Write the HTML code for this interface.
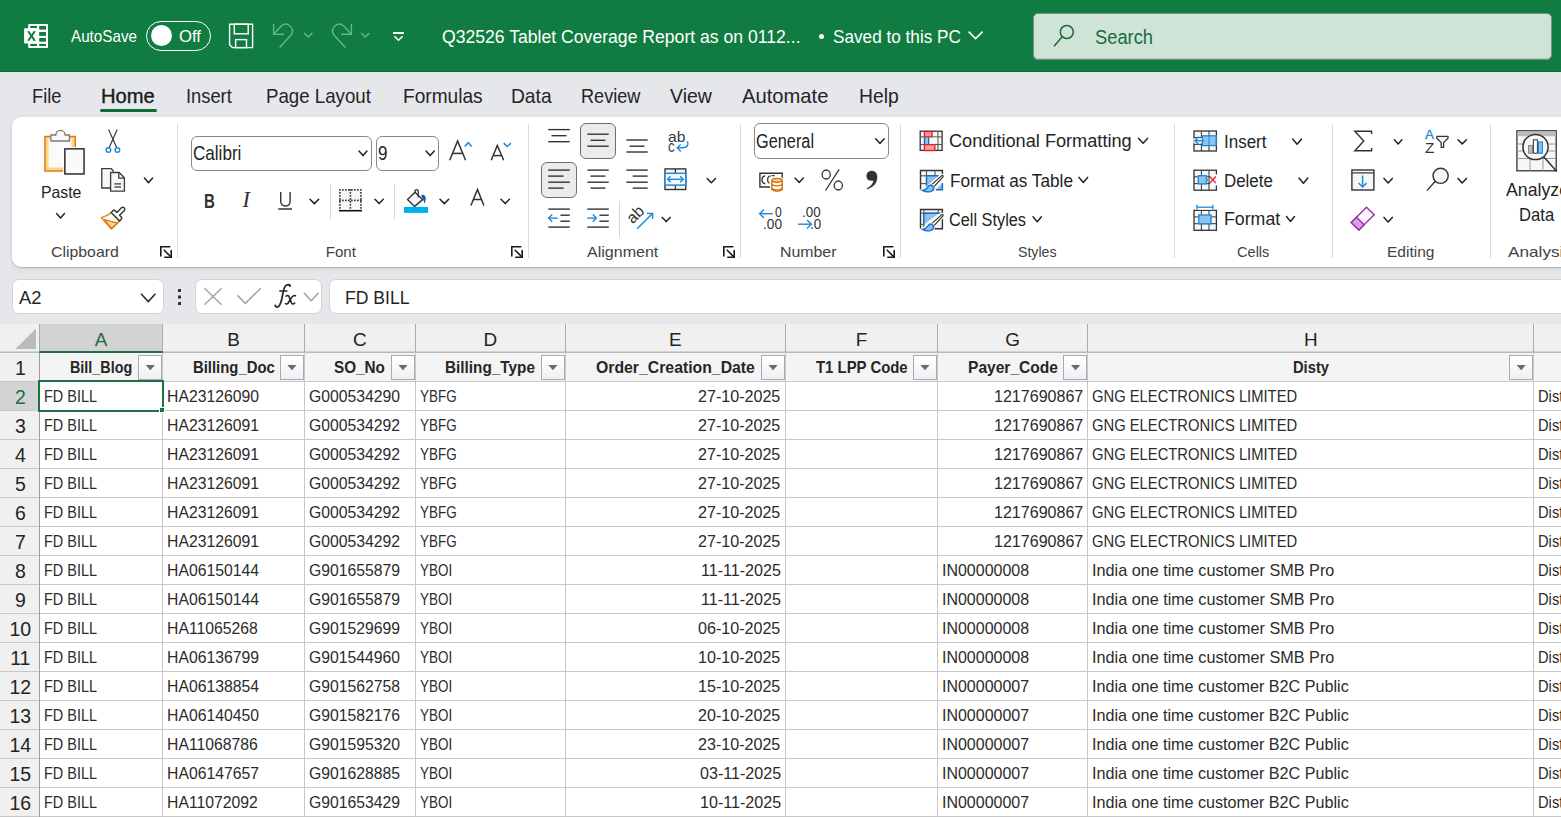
<!DOCTYPE html><html><head><meta charset="utf-8"><style>
html,body{margin:0;padding:0;width:1561px;height:817px;overflow:hidden;background:#E5E7EB;position:relative}
.t{position:absolute;white-space:nowrap;font-family:"Liberation Sans",sans-serif;line-height:normal;transform-origin:0 0}
.r{position:absolute;box-sizing:border-box}
.s{position:absolute;overflow:visible}
</style></head><body>
<div class="r" style="left:0px;top:0px;width:1561px;height:72px;background:#107C41"></div>
<div class="r" style="left:0px;top:71px;width:1561px;height:1px;background:#0C6A36"></div>
<div class="r" style="left:12px;top:116.5px;width:1580px;height:150.5px;background:#fff;border-radius:9px;box-shadow:0 1px 1.5px rgba(0,0,0,0.2),0 2px 6px rgba(0,0,0,0.07)"></div>
<svg class="s" style="left:0;top:0" width="1561" height="817" viewBox="0 0 1561 817"><g transform="translate(20,20)"><path d="M9,3.9 L27.2,3.9 Q28,3.9 28,4.7 L28,27.2 Q28,28 27.2,28 L9,28 Q8.2,28 8.2,27.2 L8.2,23.6 L4.9,23.6 Q4.1,23.6 4.1,22.8 L4.1,9 Q4.1,8.2 4.9,8.2 L8.2,8.2 L8.2,4.7 Q8.2,3.9 9,3.9 Z" fill="#fff"/><g fill="#107C41"><rect x="19.2" y="5.9" width="6.8" height="3.7"/><rect x="19.2" y="12" width="6.8" height="3.9"/><rect x="19.2" y="18" width="6.8" height="3.7"/><rect x="19.2" y="23.9" width="6.8" height="2.1"/><rect x="10.2" y="5.9" width="6.8" height="2.1"/><rect x="10.2" y="23.9" width="6.8" height="2.1"/></g><path d="M7.2,11.2 L9.6,11.2 L11.5,14.4 L13.4,11.2 L15.8,11.2 L12.8,16 L15.9,20.8 L13.5,20.8 L11.5,17.6 L9.5,20.8 L7.1,20.8 L10.2,16 Z" fill="#107C41"/></g></svg>
<div class="t" style="left:71.00px;top:27.53px;font-size:15.99px;color:#FFFFFF;transform:scaleX(0.9520);">AutoSave</div>
<div class="r" style="left:146px;top:21px;width:65px;height:30px;border:1.5px solid #fff;border-radius:15px"></div>
<div class="r" style="left:150.5px;top:24.7px;width:21.6px;height:21.6px;background:#fff;border-radius:50%"></div>
<div class="t" style="left:179.00px;top:26.87px;font-size:16.72px;color:#FFFFFF;">Off</div>
<svg class="s" style="left:0;top:0" width="1561" height="817" viewBox="0 0 1561 817"><g transform="translate(215,10)" fill="none" stroke="#fff" stroke-width="1.4"><path d="M14.6,14.2 L37.6,14.2 L37.6,37.6 L17.4,37.6 L14.6,34.8 Z"/><rect x="19.3" y="14.2" width="13.9" height="9.6"/><rect x="20.6" y="29.6" width="10.9" height="8"/></g><g transform="translate(215,10)" fill="none" stroke="#5FB88A" stroke-width="1.4"><polyline points="58.6,14 58.6,24.2 69,24.2"/><path d="M59,23.8 L66.2,16 Q71.2,12 75.6,16.4 Q79.6,21 75.4,25.8 L64.6,37.4"/><polyline points="89.2,23 93.2,27 97.4,23"/><polyline points="136.4,14 136.4,24.2 126,24.2"/><path d="M136,23.8 L128.8,16 Q123.8,12 119.4,16.4 Q115.4,21 119.6,25.8 L130.4,37.4"/><polyline points="146.2,23 150.2,27 154.4,23"/></g><rect x="393" y="32" width="11" height="2" fill="#fff"/><polyline points="394.4,36.2 398.5,40.2 402.6,36.2" fill="none" stroke="#fff" stroke-width="1.6"/></svg>
<div class="t" style="left:442.40px;top:25.89px;font-size:18.90px;color:#FFFFFF;transform:scaleX(0.9319);">Q32526 Tablet Coverage Report as on 0112...</div>
<div class="r" style="left:819px;top:34px;width:5px;height:5px;background:#fff;border-radius:50%"></div>
<div class="t" style="left:833.00px;top:25.89px;font-size:18.90px;color:#FFFFFF;transform:scaleX(0.9095);">Saved to this PC</div>
<svg class="s" style="left:0;top:0" width="1561" height="817" viewBox="0 0 1561 817"><polyline points="968.6,31.6 975.6,38.6 982.6,31.6" fill="none" stroke="#fff" stroke-width="1.6"/></svg>
<div class="r" style="left:1033px;top:12.5px;width:518.5px;height:47px;background:#CFE4D7;border:1px solid #7E8E84;border-radius:5px;box-shadow:inset 0 -1px 0 rgba(0,0,0,0.12)"></div>
<svg class="s" style="left:0;top:0" width="1561" height="817" viewBox="0 0 1561 817"><g fill="none" stroke="#1A6A3C" stroke-width="1.5"><circle cx="1066.8" cy="32" r="6.5"/><line x1="1062.2" y1="36.8" x2="1054" y2="46.2"/></g></svg>
<div class="t" style="left:1095.00px;top:24.92px;font-size:21.08px;color:#176B3D;transform:scaleX(0.8686);">Search</div>
<div class="t" style="left:32.30px;top:84.32px;font-size:20.64px;color:#242424;transform:scaleX(0.8841);">File</div>
<div class="t" style="left:101.30px;top:84.32px;font-size:20.64px;color:#1A1A1A;transform:scaleX(0.9772);-webkit-text-stroke:0.35px #1A1A1A;">Home</div>
<div class="t" style="left:186.40px;top:84.32px;font-size:20.64px;color:#242424;transform:scaleX(0.8873);">Insert</div>
<div class="t" style="left:265.70px;top:84.32px;font-size:20.64px;color:#242424;transform:scaleX(0.9060);">Page Layout</div>
<div class="t" style="left:402.70px;top:84.32px;font-size:20.64px;color:#242424;transform:scaleX(0.9255);">Formulas</div>
<div class="t" style="left:511.00px;top:84.32px;font-size:20.64px;color:#242424;transform:scaleX(0.9313);">Data</div>
<div class="t" style="left:580.60px;top:84.32px;font-size:20.64px;color:#242424;transform:scaleX(0.8777);">Review</div>
<div class="t" style="left:670.00px;top:84.32px;font-size:20.64px;color:#242424;transform:scaleX(0.9467);">View</div>
<div class="t" style="left:741.60px;top:84.32px;font-size:20.64px;color:#242424;transform:scaleX(0.9781);">Automate</div>
<div class="t" style="left:858.70px;top:84.32px;font-size:20.64px;color:#242424;transform:scaleX(0.9353);">Help</div>
<div class="r" style="left:100px;top:109px;width:57px;height:3px;background:#0F6B37;border-radius:2px"></div>
<div class="t" style="left:51.00px;top:243.32px;font-size:15.12px;color:#424242;transform:scaleX(1.0479);">Clipboard</div>
<div class="t" style="left:325.70px;top:243.32px;font-size:15.12px;color:#424242;">Font</div>
<div class="t" style="left:586.50px;top:243.32px;font-size:15.12px;color:#424242;transform:scaleX(1.0607);">Alignment</div>
<div class="t" style="left:779.50px;top:243.32px;font-size:15.12px;color:#424242;transform:scaleX(1.0510);">Number</div>
<div class="t" style="left:1017.50px;top:243.32px;font-size:15.12px;color:#424242;transform:scaleX(0.9353);">Styles</div>
<div class="t" style="left:1237.00px;top:243.32px;font-size:15.12px;color:#424242;transform:scaleX(0.9643);">Cells</div>
<div class="t" style="left:1387.40px;top:243.32px;font-size:15.12px;color:#424242;transform:scaleX(1.0256);">Editing</div>
<div class="t" style="left:1508.00px;top:243.32px;font-size:15.12px;color:#424242;transform:scaleX(1.1370);">Analysis</div>
<div class="r" style="left:177px;top:124px;width:1px;height:134px;background:#D9D9D9"></div>
<div class="r" style="left:528px;top:124px;width:1px;height:134px;background:#D9D9D9"></div>
<div class="r" style="left:740px;top:124px;width:1px;height:134px;background:#D9D9D9"></div>
<div class="r" style="left:900px;top:124px;width:1px;height:134px;background:#D9D9D9"></div>
<div class="r" style="left:1174px;top:124px;width:1px;height:134px;background:#D9D9D9"></div>
<div class="r" style="left:1332px;top:124px;width:1px;height:134px;background:#D9D9D9"></div>
<div class="r" style="left:1490px;top:124px;width:1px;height:134px;background:#D9D9D9"></div>
<svg class="s" style="left:0;top:0" width="1561" height="817" viewBox="0 0 1561 817"><g fill="none" stroke="#1A1A1A" stroke-width="1.6" stroke-linecap="round"><polyline points="160.8,256 160.8,246.8 169.8,246.8"/><line x1="164.2" y1="250.2" x2="171" y2="257"/><polyline points="171.2,250.6 171.2,257.2 164.8,257.2"/></g><g fill="none" stroke="#1A1A1A" stroke-width="1.6" stroke-linecap="round"><polyline points="511.8,256 511.8,246.8 520.8,246.8"/><line x1="515.2" y1="250.2" x2="522" y2="257"/><polyline points="522.2,250.6 522.2,257.2 515.8,257.2"/></g><g fill="none" stroke="#1A1A1A" stroke-width="1.6" stroke-linecap="round"><polyline points="723.8,256 723.8,246.8 732.8,246.8"/><line x1="727.2" y1="250.2" x2="734" y2="257"/><polyline points="734.2,250.6 734.2,257.2 727.8,257.2"/></g><g fill="none" stroke="#1A1A1A" stroke-width="1.6" stroke-linecap="round"><polyline points="883.8,256 883.8,246.8 892.8,246.8"/><line x1="887.2" y1="250.2" x2="894" y2="257"/><polyline points="894.2,250.6 894.2,257.2 887.8,257.2"/></g><g transform="translate(36,124)"><rect x="8.95" y="12.5" width="30.3" height="34.5" fill="#F9D88C" stroke="#E27A14" stroke-width="1.5"/><rect x="12.6" y="15" width="23" height="28.5" fill="#FAFAFA"/><path d="M14.9,17 L14.9,11 L19.8,11 A4.65,4.65 0 1 1 29.1,11 L33.4,11 L33.4,17 Z" fill="#FAFAFA" stroke="#7A7A7A" stroke-width="1.3"/><rect x="27.2" y="23.2" width="22.4" height="28.4" fill="#fff"/><rect x="28.85" y="24.85" width="19.2" height="25.1" fill="#FAFAFA" stroke="#2F2F2F" stroke-width="1.5"/></g></svg>
<div class="t" style="left:40.80px;top:183.17px;font-size:16.72px;color:#242424;transform:scaleX(0.9452);">Paste</div>
<svg class="s" style="left:0;top:0" width="1561" height="817" viewBox="0 0 1561 817"><polyline points="56.5,213.5 60.5,218 64.5,213.5" fill="none" stroke="#242424" stroke-width="1.5" stroke-linecap="round" stroke-linejoin="round"/><g transform="translate(96,124)" fill="none"><line x1="12.6" y1="5.5" x2="20.6" y2="23.4" stroke="#3B3B3B" stroke-width="1.2"/><line x1="21.2" y1="5.5" x2="13.2" y2="23.4" stroke="#3B3B3B" stroke-width="1.2"/><circle cx="12.4" cy="26" r="2.3" stroke="#1E8BDB" stroke-width="1.4" fill="#fff"/><circle cx="21.4" cy="26" r="2.3" stroke="#1E8BDB" stroke-width="1.4" fill="#fff"/></g><g transform="translate(96,124)" stroke="#3B3B3B" stroke-width="1.3" fill="#F7F7F7"><path d="M14,64 L5.8,64 L5.8,44.7 L15.3,44.7 L17.6,47.5" fill="#F7F7F7"/><path d="M14.6,67.2 L14.6,48.5 L23.2,48.5 L28.4,53.7 L28.4,67.2 Z" fill="#F7F7F7"/><polyline points="22.8,48.5 22.8,54.2 28.4,54.2" fill="none"/><line x1="18.4" y1="59.9" x2="25" y2="59.9"/><line x1="18.4" y1="63" x2="25" y2="63"/></g><polyline points="144.4,178 148.5,182.8 152.6,178" fill="none" stroke="#242424" stroke-width="1.5" stroke-linecap="round" stroke-linejoin="round"/><g transform="translate(96,200)" stroke-linejoin="round"><path d="M15.2,12.6 Q10.5,16.8 5.4,17.6 L15.5,29 L23.6,21 Z" fill="#FAFAFA" stroke="#E07A12" stroke-width="1.4"/><path d="M8.4,19.6 L21.4,23.2 L15.4,28.4 Z" fill="#F9D88C" stroke="#E07A12" stroke-width="1.3"/><path d="M15.2,12.6 L17.9,10.1 Q18.3,9.8 18.7,10.2 L20.9,12.4 L25.7,7.6 Q27,6.6 28.3,7.9 Q29.4,9.2 28.4,10.5 L23.5,15.3 L25.8,17.6 Q26,18 25.7,18.4 L23.6,21 Z" fill="#fff" stroke="#333" stroke-width="1.4"/></g></svg>
<div class="r" style="left:190.5px;top:135.5px;width:181px;height:35.2px;border:1px solid #8A8A8A;border-radius:6px;background:#fff"></div>
<div class="t" style="left:193.20px;top:142.44px;font-size:19.62px;color:#242424;transform:scaleX(0.8704);">Calibri</div>
<svg class="s" style="left:0;top:0" width="1561" height="817" viewBox="0 0 1561 817"><polyline points="359,151 363.0,155.6 367,151" fill="none" stroke="#242424" stroke-width="1.5" stroke-linecap="round" stroke-linejoin="round"/></svg>
<div class="r" style="left:375.5px;top:135.5px;width:63px;height:35.2px;border:1px solid #8A8A8A;border-radius:6px;background:#fff"></div>
<div class="t" style="left:378.00px;top:142.44px;font-size:19.62px;color:#242424;transform:scaleX(0.8706);">9</div>
<svg class="s" style="left:0;top:0" width="1561" height="817" viewBox="0 0 1561 817"><polyline points="426,151 430.15,155.6 434.3,151" fill="none" stroke="#242424" stroke-width="1.5" stroke-linecap="round" stroke-linejoin="round"/><g fill="none" stroke="#333" stroke-width="1.5" stroke-linejoin="miter"><polyline points="449.7,160.3 457.6,141 465.6,160.3"/><line x1="452.6" y1="153.4" x2="462.7" y2="153.4"/><polyline points="491.2,160.3 497.3,145.4 503.7,160.3"/><line x1="493.4" y1="155.6" x2="501.3" y2="155.6"/></g><polyline points="464.8,146.5 468.3,142.7 471.7,146.5" fill="none" stroke="#1E8BDB" stroke-width="1.6"/><polyline points="503.7,143.2 507.2,146.5 510.9,143.2" fill="none" stroke="#1E8BDB" stroke-width="1.6"/></svg>
<div class="t" style="left:203.60px;top:188.92px;font-size:20.64px;color:#333;font-weight:bold;transform:scaleX(0.7313);">B</div>
<div class="t" style="left:242.6px;top:187.01px;font-family:'Liberation Serif',serif;font-style:italic;font-size:22.21px;color:#333">I</div>
<svg class="s" style="left:0;top:0" width="1561" height="817" viewBox="0 0 1561 817"><path d="M280.7,192 L280.7,201 Q280.7,206 285.4,206 Q290.1,206 290.1,201 L290.1,192" fill="none" stroke="#333" stroke-width="1.4"/><line x1="278.3" y1="209" x2="292" y2="209" stroke="#333" stroke-width="1.5" stroke-linecap="butt"/><polyline points="310,199.2 314.35,203.6 318.7,199.2" fill="none" stroke="#242424" stroke-width="1.5" stroke-linecap="round" stroke-linejoin="round"/></svg>
<div class="r" style="left:329.5px;top:183.5px;width:1px;height:35px;background:#D6D6D6"></div>
<svg class="s" style="left:0;top:0" width="1561" height="817" viewBox="0 0 1561 817"><rect x="339.5" y="189" width="22" height="19" fill="#F7F7F7"/><g fill="#2A2A2A"><rect x="339.1" y="189.1" width="1.6" height="1.6"/><rect x="339.1" y="192.1" width="1.6" height="1.6"/><rect x="339.1" y="195.1" width="1.6" height="1.6"/><rect x="339.1" y="198.1" width="1.6" height="1.6"/><rect x="339.1" y="199.6" width="1.6" height="1.6"/><rect x="339.1" y="201.1" width="1.6" height="1.6"/><rect x="339.1" y="204.1" width="1.6" height="1.6"/><rect x="339.1" y="207.1" width="1.6" height="1.6"/><rect x="342.1" y="189.1" width="1.6" height="1.6"/><rect x="342.1" y="199.6" width="1.6" height="1.6"/><rect x="345.1" y="189.1" width="1.6" height="1.6"/><rect x="345.1" y="199.6" width="1.6" height="1.6"/><rect x="348.1" y="189.1" width="1.6" height="1.6"/><rect x="348.1" y="199.6" width="1.6" height="1.6"/><rect x="349.6" y="189.1" width="1.6" height="1.6"/><rect x="349.6" y="192.1" width="1.6" height="1.6"/><rect x="349.6" y="195.1" width="1.6" height="1.6"/><rect x="349.6" y="198.1" width="1.6" height="1.6"/><rect x="349.6" y="201.1" width="1.6" height="1.6"/><rect x="349.6" y="204.1" width="1.6" height="1.6"/><rect x="349.6" y="207.1" width="1.6" height="1.6"/><rect x="351.1" y="189.1" width="1.6" height="1.6"/><rect x="351.1" y="199.6" width="1.6" height="1.6"/><rect x="354.1" y="189.1" width="1.6" height="1.6"/><rect x="354.1" y="199.6" width="1.6" height="1.6"/><rect x="357.1" y="189.1" width="1.6" height="1.6"/><rect x="357.1" y="199.6" width="1.6" height="1.6"/><rect x="360.1" y="189.1" width="1.6" height="1.6"/><rect x="360.1" y="192.1" width="1.6" height="1.6"/><rect x="360.1" y="195.1" width="1.6" height="1.6"/><rect x="360.1" y="198.1" width="1.6" height="1.6"/><rect x="360.1" y="199.6" width="1.6" height="1.6"/><rect x="360.1" y="201.1" width="1.6" height="1.6"/><rect x="360.1" y="204.1" width="1.6" height="1.6"/><rect x="360.1" y="207.1" width="1.6" height="1.6"/></g><line x1="339" y1="210.7" x2="362" y2="210.7" stroke="#111" stroke-width="1.6" stroke-linecap="butt"/><polyline points="375,199.2 379.15,203.6 383.3,199.2" fill="none" stroke="#242424" stroke-width="1.5" stroke-linecap="round" stroke-linejoin="round"/></svg>
<div class="r" style="left:394px;top:183.5px;width:1px;height:35px;background:#D6D6D6"></div>
<svg class="s" style="left:0;top:0" width="1561" height="817" viewBox="0 0 1561 817"><path d="M407.5,199.6 L415,192.2 L422.6,199.6 L414.6,206.4 Z" fill="#F7F7F7" stroke="#333" stroke-width="1.4" stroke-linejoin="round"/><path d="M415,192.6 L415,190.6 Q416.6,188.6 418.2,190.6 L418.4,197.4" fill="none" stroke="#333" stroke-width="1.3"/><path d="M421,195.2 Q425,193.4 425.8,198.4 Q425.6,201.2 424.6,203.8 Q423.4,199 421,195.2 Z" fill="#0F5FB0"/><rect x="404" y="206.9" width="24" height="6" fill="#00AFEF"/><polyline points="440,199.2 444.35,203.6 448.7,199.2" fill="none" stroke="#242424" stroke-width="1.5" stroke-linecap="round" stroke-linejoin="round"/><g fill="none" stroke="#333" stroke-width="1.5"><polyline points="470.9,205.5 477.5,189.6 483.9,205.5"/><line x1="473.2" y1="199.5" x2="481.6" y2="199.5"/></g><polyline points="501,199.2 505.2,203.6 509.4,199.2" fill="none" stroke="#242424" stroke-width="1.5" stroke-linecap="round" stroke-linejoin="round"/><line x1="548.2" y1="129.6" x2="569.8" y2="129.6" stroke="#333" stroke-width="1.4"/><line x1="551.5" y1="135.7" x2="566.5" y2="135.7" stroke="#333" stroke-width="1.4"/><line x1="548.2" y1="141.7" x2="569.8" y2="141.7" stroke="#333" stroke-width="1.4"/></svg>
<div class="r" style="left:580.2px;top:123.1px;width:35.6px;height:35.6px;background:#EBEBEB;border:1px solid #6E6E6E;border-radius:6px"></div>
<svg class="s" style="left:0;top:0" width="1561" height="817" viewBox="0 0 1561 817"><line x1="587.4" y1="134.2" x2="608.7" y2="134.2" stroke="#333" stroke-width="1.4"/><line x1="590.5" y1="140.3" x2="605.5" y2="140.3" stroke="#333" stroke-width="1.4"/><line x1="587.4" y1="146.2" x2="608.7" y2="146.2" stroke="#333" stroke-width="1.4"/><line x1="626.4" y1="140" x2="647.7" y2="140" stroke="#333" stroke-width="1.4"/><line x1="629.5" y1="146.2" x2="644.5" y2="146.2" stroke="#333" stroke-width="1.4"/><line x1="626.4" y1="152" x2="647.7" y2="152" stroke="#333" stroke-width="1.4"/></svg>
<div class="t" style="left:667.60px;top:127.65px;font-size:15.41px;color:#3A3A3A;transform:scaleX(1.0154);">ab</div>
<div class="t" style="left:667.80px;top:137.00px;font-size:16.57px;color:#3A3A3A;transform:scaleX(0.7966);">c</div>
<svg class="s" style="left:0;top:0" width="1561" height="817" viewBox="0 0 1561 817"><path d="M687.4,141.2 Q689.6,147.5 682.5,147.8 L677.2,147.8" fill="none" stroke="#1E8BDB" stroke-width="1.4"/><polyline points="680.6,144.4 677.2,147.8 680.8,151.4" fill="none" stroke="#1E8BDB" stroke-width="1.4"/></svg>
<div class="r" style="left:541.1px;top:162.3px;width:35.8px;height:35.6px;background:#EBEBEB;border:1px solid #6E6E6E;border-radius:6px"></div>
<svg class="s" style="left:0;top:0" width="1561" height="817" viewBox="0 0 1561 817"><line x1="548.2" y1="170.1" x2="569.8" y2="170.1" stroke="#333" stroke-width="1.4"/><line x1="548.2" y1="176.1" x2="563.6" y2="176.1" stroke="#333" stroke-width="1.4"/><line x1="548.2" y1="182.2" x2="569.8" y2="182.2" stroke="#333" stroke-width="1.4"/><line x1="548.2" y1="188.1" x2="563.6" y2="188.1" stroke="#333" stroke-width="1.4"/><line x1="587.4" y1="170.1" x2="608.7" y2="170.1" stroke="#333" stroke-width="1.4"/><line x1="590.5" y1="176.1" x2="605.5" y2="176.1" stroke="#333" stroke-width="1.4"/><line x1="587.4" y1="182.2" x2="608.7" y2="182.2" stroke="#333" stroke-width="1.4"/><line x1="590.5" y1="188.1" x2="605.5" y2="188.1" stroke="#333" stroke-width="1.4"/><line x1="626.4" y1="170.1" x2="647.7" y2="170.1" stroke="#333" stroke-width="1.4"/><line x1="632.7" y1="176.1" x2="647.7" y2="176.1" stroke="#333" stroke-width="1.4"/><line x1="626.4" y1="182.2" x2="647.7" y2="182.2" stroke="#333" stroke-width="1.4"/><line x1="632.7" y1="188.1" x2="647.7" y2="188.1" stroke="#333" stroke-width="1.4"/><rect x="665" y="168.9" width="20.8" height="20.6" fill="#F7F7F7" stroke="#333" stroke-width="1.4"/><line x1="675.4" y1="168.9" x2="675.4" y2="189.5" stroke="#333" stroke-width="1.3"/><rect x="665" y="173.3" width="20.8" height="11.8" fill="#F7F7F7" stroke="#1E8BDB" stroke-width="1.5"/><g fill="none" stroke="#1E8BDB" stroke-width="1.4"><line x1="667.6" y1="179.3" x2="683.2" y2="179.3"/><polyline points="670.6,176.3 667.6,179.3 670.6,182.3"/><polyline points="680.2,176.3 683.2,179.3 680.2,182.3"/></g><polyline points="707.2,178.5 711.35,182.7 715.5,178.5" fill="none" stroke="#242424" stroke-width="1.5" stroke-linecap="round" stroke-linejoin="round"/><line x1="548.3" y1="209.1" x2="569.8" y2="209.1" stroke="#333" stroke-width="1.4"/><line x1="560.4" y1="215.2" x2="569.8" y2="215.2" stroke="#333" stroke-width="1.4"/><line x1="560.4" y1="221.2" x2="569.8" y2="221.2" stroke="#333" stroke-width="1.4"/><line x1="548.3" y1="227.1" x2="569.8" y2="227.1" stroke="#333" stroke-width="1.4"/><g fill="none" stroke="#1E8BDB" stroke-width="1.4"><line x1="548.8" y1="218.1" x2="557.7" y2="218.1"/><polyline points="552.2,214.4 548.6,218.1 552.2,221.8"/></g><line x1="587.3" y1="209.1" x2="608.8" y2="209.1" stroke="#333" stroke-width="1.4"/><line x1="599.4" y1="215.2" x2="608.8" y2="215.2" stroke="#333" stroke-width="1.4"/><line x1="599.4" y1="221.2" x2="608.8" y2="221.2" stroke="#333" stroke-width="1.4"/><line x1="587.3" y1="227.1" x2="608.8" y2="227.1" stroke="#333" stroke-width="1.4"/><g fill="none" stroke="#1E8BDB" stroke-width="1.4"><line x1="587.3" y1="218.1" x2="596.2" y2="218.1"/><polyline points="592.8,214.4 596.4,218.1 592.8,221.8"/></g></svg>
<div class="r" style="left:619px;top:201.3px;width:1px;height:35.4px;background:#D6D6D6"></div>
<div class="t" style="left:628px;top:205px;font-size:16px;color:#333;transform:rotate(-45deg);transform-origin:9px 11px">ab</div>
<svg class="s" style="left:0;top:0" width="1561" height="817" viewBox="0 0 1561 817"><g fill="none" stroke="#1E8BDB" stroke-width="1.5"><line x1="637.2" y1="228.8" x2="652.2" y2="213.8"/><polyline points="647,213.4 652.6,213.4 652.6,219"/></g><polyline points="662.2,217.4 666.2,221.6 670.2,217.4" fill="none" stroke="#242424" stroke-width="1.5" stroke-linecap="round" stroke-linejoin="round"/></svg>
<div class="r" style="left:753.5px;top:123.4px;width:135.2px;height:35.3px;border:1px solid #8A8A8A;border-radius:6px;background:#fff"></div>
<div class="t" style="left:756.40px;top:130.30px;font-size:19.77px;color:#242424;transform:scaleX(0.8248);">General</div>
<svg class="s" style="left:0;top:0" width="1561" height="817" viewBox="0 0 1561 817"><polyline points="875.7,138.8 879.95,143.4 884.2,138.8" fill="none" stroke="#242424" stroke-width="1.5" stroke-linecap="round" stroke-linejoin="round"/><path d="M770.6,187 L759.9,187 L759.9,173.2 L782.2,173.2 L782.2,178" fill="none" stroke="#333" stroke-width="1.4"/><path d="M765.4,175.8 Q762,176.2 762,179.8 Q762,183.4 765.4,183.8 M770.6,175.8 Q767.6,176.2 767.6,179.8 Q767.6,182.6 769.4,183.4 M771.6,175.6 L774.6,175.6" fill="none" stroke="#333" stroke-width="1.3"/><rect x="770" y="177.6" width="14" height="15" rx="3" fill="#fff"/><path d="M771.9,180.3 L771.9,189.6 Q777,192.8 782.2,189.6 L782.2,180.3" fill="#fff" stroke="#D9730D" stroke-width="1.5"/><ellipse cx="777.05" cy="180.3" rx="5.15" ry="1.9" fill="#F9D88C" stroke="#D9730D" stroke-width="1.5"/><path d="M771.9,184.6 Q777,187.2 782.2,184.6 M771.9,188.6 Q777,191.2 782.2,188.6" fill="none" stroke="#D9730D" stroke-width="1.4"/><polyline points="795,178.1 799.2,182.5 803.4,178.1" fill="none" stroke="#242424" stroke-width="1.5" stroke-linecap="round" stroke-linejoin="round"/><g fill="none" stroke="#333" stroke-width="1.3"><ellipse cx="826.2" cy="174.5" rx="4.1" ry="4.5"/><ellipse cx="838.3" cy="185.5" rx="4.1" ry="4.5"/><line x1="839.2" y1="169.4" x2="825.5" y2="190.5"/></g><path d="M871.8,170.8 Q877.6,171 877.3,178 Q876.8,186 867.2,189.4 L866.8,188.4 Q872.6,185.4 873.4,180.8 Q866.6,181.4 866.4,176 Q866.6,171 871.8,170.8 Z" fill="#333"/></svg>
<div class="t" style="left:775.00px;top:204.14px;font-size:14.54px;color:#333;transform:scaleX(0.8413);">0</div>
<div class="t" style="left:763.00px;top:216.34px;font-size:14.54px;color:#333;transform:scaleX(0.9404);">.00</div>
<svg class="s" style="left:0;top:0" width="1561" height="817" viewBox="0 0 1561 817"><g fill="none" stroke="#1E8BDB" stroke-width="1.4"><line x1="759.6" y1="213.7" x2="772.8" y2="213.7"/><polyline points="764,209.4 759.6,213.7 764,218"/></g></svg>
<div class="t" style="left:802.40px;top:204.14px;font-size:14.54px;color:#333;transform:scaleX(0.9206);">.00</div>
<div class="t" style="left:809.60px;top:216.34px;font-size:14.54px;color:#333;transform:scaleX(0.9240);">.0</div>
<svg class="s" style="left:0;top:0" width="1561" height="817" viewBox="0 0 1561 817"><g fill="none" stroke="#1E8BDB" stroke-width="1.4"><line x1="798" y1="224.2" x2="811.4" y2="224.2"/><polyline points="807,219.9 811.4,224.2 807,228.5"/></g><g transform="translate(914,125)"><rect x="6.2" y="6.2" width="21.9" height="19.2" fill="#F7F7F7" stroke="#333" stroke-width="1.3"/><g stroke="#555" stroke-width="1.1"><line x1="6.2" y1="11.9" x2="28.1" y2="11.9"/><line x1="6.2" y1="19.5" x2="28.1" y2="19.5"/><line x1="23.9" y1="6.2" x2="23.9" y2="25.4"/></g><rect x="10.4" y="6.5" width="7.6" height="5.4" fill="#FF9BA3" stroke="#E3231D" stroke-width="1.4"/><rect x="10.4" y="19.6" width="10.4" height="5.9" fill="#FF9BA3" stroke="#E3231D" stroke-width="1.4"/><rect x="10.4" y="12.6" width="4.3" height="6.4" fill="#8DC2EE"/><line x1="10.5" y1="12.4" x2="10.5" y2="19.2" stroke="#1466C0" stroke-width="1.4"/><line x1="14.7" y1="12.4" x2="14.7" y2="19.2" stroke="#1466C0" stroke-width="1.4"/><rect x="15.6" y="12.6" width="7.6" height="6.2" fill="#F9F9F9"/></g></svg>
<div class="t" style="left:949.30px;top:130.49px;font-size:18.90px;color:#242424;transform:scaleX(0.9611);">Conditional Formatting</div>
<svg class="s" style="left:0;top:0" width="1561" height="817" viewBox="0 0 1561 817"><polyline points="1138.5,138.2 1143.1,143.3 1147.7,138.2" fill="none" stroke="#242424" stroke-width="1.5" stroke-linecap="round" stroke-linejoin="round"/><g transform="translate(914,164)"><rect x="6.5" y="6.5" width="21.9" height="19.2" fill="#F7F7F7"/><g fill="none" stroke="#333" stroke-width="1.4"><path d="M6.5,25.9 L6.5,6.5 L28.4,6.5 L28.4,10.8"/></g><g stroke="#555" stroke-width="1.1"><line x1="12.5" y1="6.5" x2="12.5" y2="11.8"/><line x1="21" y1="6.5" x2="21" y2="11.8"/><line x1="6.5" y1="11.8" x2="12.5" y2="11.8"/><line x1="6.5" y1="19.6" x2="12.5" y2="19.6"/></g><polygon points="12.5,11.8 24.6,11.8 12.5,22.6" fill="#8DC2EE"/><polyline points="12.5,22.6 12.5,11.8 24.6,11.8" fill="none" stroke="#1B6EC2" stroke-width="1.5"/><polygon points="28.4,19 28.4,25.8 21.8,25.8" fill="#8DC2EE"/><polyline points="28.4,19 28.4,25.8 21.8,25.8" fill="none" stroke="#1B6EC2" stroke-width="1.5"/><path d="M17.4,20.9 L27.8,11.6 Q29.4,11 29,12.8 L19.6,23.1 Z" fill="none" stroke="#fff" stroke-width="3.6" stroke-linejoin="round"/><path d="M17.4,20.9 L27.8,11.6 Q29.4,11 29,12.8 L19.6,23.1 Z" fill="#fff" stroke="#333" stroke-width="1.2" stroke-linejoin="round"/><path d="M19.8,23.6 Q20,26.6 16.2,27.6 Q12,28.4 8.4,26.4 Q12.2,25.8 13.6,23.4 Q15.4,20.2 17.8,21.2 Z" fill="none" stroke="#fff" stroke-width="2.4"/><path d="M19.8,23.6 Q20,26.6 16.2,27.6 Q12,28.4 8.4,26.4 Q12.2,25.8 13.6,23.4 Q15.4,20.2 17.8,21.2 Z" fill="#8DC2EE" stroke="#1B6EC2" stroke-width="1.4"/></g></svg>
<div class="t" style="left:950.00px;top:169.69px;font-size:18.90px;color:#242424;transform:scaleX(0.9103);">Format as Table</div>
<svg class="s" style="left:0;top:0" width="1561" height="817" viewBox="0 0 1561 817"><polyline points="1079,177.4 1083.3,182.4 1087.6,177.4" fill="none" stroke="#242424" stroke-width="1.5" stroke-linecap="round" stroke-linejoin="round"/><g transform="translate(914,203)"><rect x="6.5" y="6.5" width="21.9" height="19.2" fill="#F7F7F7"/><g fill="none" stroke="#333" stroke-width="1.4"><path d="M6.5,25.9 L6.5,6.5 L28.4,6.5 L28.4,25.8 L20.5,25.8"/></g><g stroke="#555" stroke-width="1.1"><line x1="9.8" y1="6.5" x2="9.8" y2="24"/><line x1="24.1" y1="6.5" x2="24.1" y2="10.2"/><line x1="6.5" y1="10.2" x2="28.4" y2="10.2"/><line x1="6.5" y1="21.4" x2="10" y2="21.4"/></g><polygon points="9.8,10.2 24.6,10.2 9.8,21.8" fill="#8DC2EE"/><polyline points="9.8,21.8 9.8,10.2 24.6,10.2" fill="none" stroke="#1B6EC2" stroke-width="1.5"/><path d="M17.4,20.9 L27.8,11.6 Q29.4,11 29,12.8 L19.6,23.1 Z" fill="none" stroke="#fff" stroke-width="3.6" stroke-linejoin="round"/><path d="M17.4,20.9 L27.8,11.6 Q29.4,11 29,12.8 L19.6,23.1 Z" fill="#fff" stroke="#333" stroke-width="1.2" stroke-linejoin="round"/><path d="M19.8,23.6 Q20,26.6 16.2,27.6 Q12,28.4 8.4,26.4 Q12.2,25.8 13.6,23.4 Q15.4,20.2 17.8,21.2 Z" fill="none" stroke="#fff" stroke-width="2.4"/><path d="M19.8,23.6 Q20,26.6 16.2,27.6 Q12,28.4 8.4,26.4 Q12.2,25.8 13.6,23.4 Q15.4,20.2 17.8,21.2 Z" fill="#8DC2EE" stroke="#1B6EC2" stroke-width="1.4"/></g></svg>
<div class="t" style="left:949.30px;top:208.89px;font-size:18.90px;color:#242424;transform:scaleX(0.8627);">Cell Styles</div>
<svg class="s" style="left:0;top:0" width="1561" height="817" viewBox="0 0 1561 817"><polyline points="1033,216.8 1037.2,221.8 1041.4,216.8" fill="none" stroke="#242424" stroke-width="1.5" stroke-linecap="round" stroke-linejoin="round"/><g transform="translate(1193.3,130.3)"><rect x="0.7" y="0.7" width="22.4" height="20" fill="#F7F7F7" stroke="#333" stroke-width="1.3"/><g stroke="#333" stroke-width="1"><line x1="0.7" y1="7.3" x2="23.1" y2="7.3"/><line x1="0.7" y1="14.1" x2="23.1" y2="14.1"/><line x1="8.1" y1="0.7" x2="8.1" y2="20.7"/><line x1="15.7" y1="0.7" x2="15.7" y2="20.7"/></g><rect x="9" y="5.5" width="13.8" height="9.8" fill="#8FC3EF" stroke="#1E8BDB" stroke-width="1.3"/><line x1="15.7" y1="5.5" x2="15.7" y2="15.3" stroke="#1E8BDB" stroke-width="1"/><rect x="0" y="8" width="8.6" height="5" fill="#F7F7F7"/><g fill="none" stroke="#1E8BDB" stroke-width="1.5"><line x1="1.6" y1="10.4" x2="11" y2="10.4"/><polyline points="5.6,6.4 1.6,10.4 5.6,14.4"/></g></g></svg>
<div class="t" style="left:1223.90px;top:130.89px;font-size:18.90px;color:#242424;transform:scaleX(0.8994);">Insert</div>
<svg class="s" style="left:0;top:0" width="1561" height="817" viewBox="0 0 1561 817"><polyline points="1292.7,139 1297.1,144.2 1301.5,139" fill="none" stroke="#242424" stroke-width="1.5" stroke-linecap="round" stroke-linejoin="round"/><g transform="translate(1193.3,169.5)"><rect x="0.7" y="0.7" width="22.4" height="20" fill="#F7F7F7" stroke="#333" stroke-width="1.3"/><g stroke="#333" stroke-width="1"><line x1="0.7" y1="7.3" x2="23.1" y2="7.3"/><line x1="0.7" y1="14.1" x2="23.1" y2="14.1"/><line x1="8.1" y1="0.7" x2="8.1" y2="20.7"/><line x1="15.7" y1="0.7" x2="15.7" y2="20.7"/></g><rect x="17" y="5" width="6.9" height="11" fill="#fff"/><rect x="5" y="6.2" width="8.2" height="8.2" fill="#8FC3EF" stroke="#1E8BDB" stroke-width="1.4"/><polygon points="13.2,8.4 15,10.3 13.2,12.2" fill="#1E8BDB"/><g stroke="#E8323C" stroke-width="1.5"><line x1="16.4" y1="7" x2="22.6" y2="13.6"/><line x1="22.6" y1="7" x2="16.4" y2="13.6"/></g></g></svg>
<div class="t" style="left:1223.90px;top:169.79px;font-size:18.90px;color:#242424;transform:scaleX(0.8935);">Delete</div>
<svg class="s" style="left:0;top:0" width="1561" height="817" viewBox="0 0 1561 817"><polyline points="1299,178 1303.4,183.2 1307.8,178" fill="none" stroke="#242424" stroke-width="1.5" stroke-linecap="round" stroke-linejoin="round"/><g transform="translate(1193.3,209.6)"><rect x="0.7" y="0.7" width="22.4" height="20" fill="#F7F7F7" stroke="#333" stroke-width="1.3"/><g stroke="#333" stroke-width="1"><line x1="0.7" y1="7.3" x2="23.1" y2="7.3"/><line x1="0.7" y1="14.1" x2="23.1" y2="14.1"/><line x1="8.1" y1="0.7" x2="8.1" y2="20.7"/><line x1="15.7" y1="0.7" x2="15.7" y2="20.7"/></g><rect x="5.5" y="5.4" width="12.2" height="8.8" fill="#8FC3EF" stroke="#1E8BDB" stroke-width="1.4"/><rect x="2" y="-4" width="20" height="4" fill="#fff"/><g stroke="#1E8BDB" stroke-width="1.3"><line x1="3.6" y1="-2.4" x2="19.6" y2="-2.4"/><line x1="3.6" y1="-4.8" x2="3.6" y2="0"/><line x1="19.6" y1="-4.8" x2="19.6" y2="0"/></g></g></svg>
<div class="t" style="left:1224.00px;top:208.09px;font-size:18.90px;color:#242424;transform:scaleX(0.9392);">Format</div>
<svg class="s" style="left:0;top:0" width="1561" height="817" viewBox="0 0 1561 817"><polyline points="1286.5,216.6 1290.5,221.4 1294.5,216.6" fill="none" stroke="#242424" stroke-width="1.5" stroke-linecap="round" stroke-linejoin="round"/><path d="M1371.6,134 L1371.6,131.3 L1354.8,131.3 L1363.8,141 L1354.8,150.7 L1371.6,150.7 L1371.6,148" fill="none" stroke="#333" stroke-width="1.4" stroke-linejoin="miter"/><polyline points="1394.4,139.8 1398.15,143.9 1401.9,139.8" fill="none" stroke="#242424" stroke-width="1.5" stroke-linecap="round" stroke-linejoin="round"/></svg>
<div class="t" style="left:1425.20px;top:126.69px;font-size:12.94px;color:#1E8BDB;transform:scaleX(1.0314);-webkit-text-stroke:0.3px #1E8BDB;">A</div>
<div class="t" style="left:1425.20px;top:139.25px;font-size:14.97px;color:#333;transform:scaleX(1.0280);">Z</div>
<svg class="s" style="left:0;top:0" width="1561" height="817" viewBox="0 0 1561 817"><path d="M1436.8,136.3 L1448,136.3 L1448,138.2 L1443.6,142.6 L1443.6,147.4 L1441.2,147.4 L1441.2,142.6 L1436.8,138.2 Z" fill="#F7F7F7" stroke="#333" stroke-width="1.3" stroke-linejoin="round"/><polyline points="1458,139.8 1462.2,143.9 1466.4,139.8" fill="none" stroke="#242424" stroke-width="1.5" stroke-linecap="round" stroke-linejoin="round"/><rect x="1351.9" y="170" width="22" height="20" fill="#F7F7F7" stroke="#333" stroke-width="1.4"/><line x1="1351.9" y1="172.9" x2="1373.9" y2="172.9" stroke="#333" stroke-width="1.2"/><g fill="none" stroke="#1E8BDB" stroke-width="1.5"><line x1="1362.6" y1="175.6" x2="1362.6" y2="187"/><polyline points="1358.6,183 1362.6,187 1366.6,183"/></g><polyline points="1384,178.4 1388.15,183 1392.3,178.4" fill="none" stroke="#242424" stroke-width="1.5" stroke-linecap="round" stroke-linejoin="round"/><circle cx="1440.6" cy="175.8" r="7.6" fill="#F7F7F7" stroke="#333" stroke-width="1.4"/><line x1="1435.2" y1="181.2" x2="1427" y2="190.6" stroke="#333" stroke-width="1.4"/><polyline points="1458,178.4 1462.2,183 1466.4,178.4" fill="none" stroke="#242424" stroke-width="1.5" stroke-linecap="round" stroke-linejoin="round"/><g transform="translate(1362.7,218.6) rotate(-45)"><rect x="-10.8" y="-5.4" width="21.6" height="10.8" fill="#F7F7F7" stroke="#9B2FAE" stroke-width="1.4"/><rect x="-10.8" y="-5.4" width="7.4" height="10.8" fill="#D7A2E0" stroke="#9B2FAE" stroke-width="1.4"/></g><polyline points="1384,217.4 1388.15,222 1392.3,217.4" fill="none" stroke="#242424" stroke-width="1.5" stroke-linecap="round" stroke-linejoin="round"/><g transform="translate(1495,120)"><rect x="21.9" y="10.8" width="39.3" height="40" fill="#F7F7F7" stroke="#333" stroke-width="1.3"/><rect x="22.5" y="11.4" width="38" height="4.8" fill="#BDBDBD"/><g stroke="#9A9A9A" stroke-width="1"><line x1="22" y1="24" x2="61" y2="24"/><line x1="22" y1="31" x2="61" y2="31"/><line x1="22" y1="38.5" x2="61" y2="38.5"/><line x1="35" y1="16" x2="35" y2="51"/><line x1="48" y1="16" x2="48" y2="51"/></g><line x1="48" y1="36" x2="61.8" y2="51.4" stroke="#333" stroke-width="1.5"/><circle cx="40.5" cy="27" r="12.6" fill="#F7F7F7" stroke="#333" stroke-width="1.5"/><rect x="33.6" y="25.6" width="4" height="7.6" fill="#BDBDBD" stroke="#777" stroke-width="0.8"/><rect x="38.4" y="19.8" width="4" height="13.4" fill="#fff" stroke="#333" stroke-width="1"/><rect x="43.4" y="22" width="4" height="11.2" fill="#8FC3EF" stroke="#1E8BDB" stroke-width="1.2"/></g></svg>
<div class="t" style="left:1506.40px;top:180.48px;font-size:18.02px;color:#242424;transform:scaleX(0.9826);">Analyze</div>
<div class="t" style="left:1519.10px;top:204.68px;font-size:18.02px;color:#242424;transform:scaleX(0.9246);">Data</div>
<div class="r" style="left:12px;top:279px;width:151.5px;height:34.5px;background:#fff;border:1px solid #D2D4D8;border-radius:7px"></div>
<div class="t" style="left:19.20px;top:286.53px;font-size:19.19px;color:#242424;transform:scaleX(0.9545);">A2</div>
<svg class="s" style="left:0;top:0" width="1561" height="817" viewBox="0 0 1561 817"><polyline points="141.5,294.2 148.25,301.6 155,294.2" fill="none" stroke="#333" stroke-width="1.6" stroke-linecap="round" stroke-linejoin="round"/><rect x="178" y="289" width="3" height="3" fill="#333"/><rect x="178" y="295.5" width="3" height="3" fill="#333"/><rect x="178" y="302" width="3" height="3" fill="#333"/></svg>
<div class="r" style="left:194.5px;top:279px;width:127px;height:34.5px;background:#fff;border:1px solid #D2D4D8;border-radius:7px"></div>
<svg class="s" style="left:0;top:0" width="1561" height="817" viewBox="0 0 1561 817"><g stroke="#A6A6A6" stroke-width="1.5" fill="none"><line x1="204.4" y1="288.2" x2="221.6" y2="304.8"/><line x1="221.6" y1="288.2" x2="204.4" y2="304.8"/><polyline points="237.4,295.4 245.3,303.4 260.8,288.2"/></g><g fill="none" stroke="#262626" stroke-linecap="round"><path d="M275.6,306.4 Q277.6,308.2 279.6,305.2 Q281.2,302.4 282.6,295 L283.8,289.4 Q285,284.8 288.2,284.6 Q290,284.6 290,286" stroke-width="1.7"/><line x1="279.8" y1="291" x2="287" y2="291" stroke-width="1.4"/><path d="M286.2,296.2 Q288.4,294.2 289.4,297.6 L291.2,302.4 Q292.4,305.2 294.8,303" stroke-width="1.6"/><path d="M295.4,295.8 Q293.4,294.6 290.6,299 L288.8,302 Q287.2,305 285.6,303.6" stroke-width="1.6"/><circle cx="275.3" cy="305.6" r="1" fill="#262626" stroke="none"/><circle cx="289.8" cy="285.6" r="1" fill="#262626" stroke="none"/></g><polyline points="304.3,293.3 311.25,300.8 318.2,293.3" fill="none" stroke="#999" stroke-width="1.3" stroke-linecap="round" stroke-linejoin="round"/></svg>
<div class="r" style="left:328.5px;top:279px;width:1300px;height:34.5px;background:#fff;border:1px solid #D2D4D8;border-radius:7px"></div>
<div class="t" style="left:345.40px;top:286.53px;font-size:19.19px;color:#242424;transform:scaleX(0.9180);">FD BILL</div>
<div class="r" style="left:0px;top:324px;width:1561px;height:493px;background:#fff"></div>
<div class="r" style="left:0px;top:324px;width:1561px;height:28px;background:#F0F0F0"></div>
<div class="r" style="left:39.5px;top:324px;width:123.2px;height:28px;background:#D3D3D3"></div>
<div class="r" style="left:0px;top:352px;width:39.5px;height:465px;background:#F0F0F0"></div>
<div class="r" style="left:39.5px;top:352px;width:1522px;height:29px;background:#F4F4F4"></div>
<div class="r" style="left:0px;top:381px;width:39.5px;height:29px;background:#D3D3D3"></div>
<svg class="s" style="left:0;top:0" width="1561" height="817" viewBox="0 0 1561 817"><rect x="0" y="352" width="1561" height="1" fill="#BDBDBD"/><rect x="0" y="381" width="1561" height="1" fill="#C8C8C8"/><rect x="0" y="410" width="1561" height="1" fill="#C8C8C8"/><rect x="0" y="439" width="1561" height="1" fill="#C8C8C8"/><rect x="0" y="468" width="1561" height="1" fill="#C8C8C8"/><rect x="0" y="497" width="1561" height="1" fill="#C8C8C8"/><rect x="0" y="526" width="1561" height="1" fill="#C8C8C8"/><rect x="0" y="555" width="1561" height="1" fill="#C8C8C8"/><rect x="0" y="584" width="1561" height="1" fill="#C8C8C8"/><rect x="0" y="613" width="1561" height="1" fill="#C8C8C8"/><rect x="0" y="642" width="1561" height="1" fill="#C8C8C8"/><rect x="0" y="671" width="1561" height="1" fill="#C8C8C8"/><rect x="0" y="700" width="1561" height="1" fill="#C8C8C8"/><rect x="0" y="729" width="1561" height="1" fill="#C8C8C8"/><rect x="0" y="758" width="1561" height="1" fill="#C8C8C8"/><rect x="0" y="787" width="1561" height="1" fill="#C8C8C8"/><rect x="0" y="816" width="1561" height="1" fill="#C8C8C8"/><rect x="0" y="351.5" width="1561" height="1" fill="#B5B5B5"/><rect x="39" y="324" width="1" height="28" fill="#ABABAB"/><rect x="39" y="352" width="1" height="465" fill="#9E9E9E"/><rect x="162" y="324" width="1" height="28" fill="#ABABAB"/><rect x="162" y="352" width="1" height="465" fill="#C8C8C8"/><rect x="304" y="324" width="1" height="28" fill="#ABABAB"/><rect x="304" y="352" width="1" height="465" fill="#C8C8C8"/><rect x="415" y="324" width="1" height="28" fill="#ABABAB"/><rect x="415" y="352" width="1" height="465" fill="#C8C8C8"/><rect x="565" y="324" width="1" height="28" fill="#ABABAB"/><rect x="565" y="352" width="1" height="465" fill="#C8C8C8"/><rect x="785" y="324" width="1" height="28" fill="#ABABAB"/><rect x="785" y="352" width="1" height="465" fill="#C8C8C8"/><rect x="937" y="324" width="1" height="28" fill="#ABABAB"/><rect x="937" y="352" width="1" height="465" fill="#C8C8C8"/><rect x="1087" y="324" width="1" height="28" fill="#ABABAB"/><rect x="1087" y="352" width="1" height="465" fill="#C8C8C8"/><rect x="1533" y="324" width="1" height="28" fill="#ABABAB"/><rect x="1533" y="352" width="1" height="465" fill="#C8C8C8"/><polygon points="36,328.5 36,349 15.4,349" fill="#BBBBBB"/></svg>
<div class="t" style="left:94.80px;top:328.69px;font-size:18.90px;color:#1E6B43;">A</div>
<div class="t" style="left:227.20px;top:328.69px;font-size:18.90px;color:#242424;">B</div>
<div class="t" style="left:353.03px;top:328.69px;font-size:18.90px;color:#242424;">C</div>
<div class="t" style="left:483.53px;top:328.69px;font-size:18.90px;color:#242424;">D</div>
<div class="t" style="left:669.10px;top:328.69px;font-size:18.90px;color:#242424;">E</div>
<div class="t" style="left:855.68px;top:328.69px;font-size:18.90px;color:#242424;">F</div>
<div class="t" style="left:1005.35px;top:328.69px;font-size:18.90px;color:#242424;">G</div>
<div class="t" style="left:1303.98px;top:328.69px;font-size:18.90px;color:#242424;">H</div>
<svg class="s" style="left:0;top:0" width="1561" height="817" viewBox="0 0 1561 817"><rect x="39.5" y="351" width="123.2" height="2" fill="#1E7145"/></svg>
<div class="t" style="left:14.88px;top:357.07px;font-size:19.48px;color:#242424;">1</div>
<div class="t" style="left:14.88px;top:385.57px;font-size:19.48px;color:#1E6B43;">2</div>
<div class="t" style="left:14.88px;top:414.57px;font-size:19.48px;color:#242424;">3</div>
<div class="t" style="left:14.88px;top:443.57px;font-size:19.48px;color:#242424;">4</div>
<div class="t" style="left:14.88px;top:472.57px;font-size:19.48px;color:#242424;">5</div>
<div class="t" style="left:14.88px;top:501.57px;font-size:19.48px;color:#242424;">6</div>
<div class="t" style="left:14.88px;top:530.57px;font-size:19.48px;color:#242424;">7</div>
<div class="t" style="left:14.88px;top:559.57px;font-size:19.48px;color:#242424;">8</div>
<div class="t" style="left:14.88px;top:588.57px;font-size:19.48px;color:#242424;">9</div>
<div class="t" style="left:9.47px;top:617.57px;font-size:19.48px;color:#242424;">10</div>
<div class="t" style="left:10.19px;top:646.57px;font-size:19.48px;color:#242424;">11</div>
<div class="t" style="left:9.47px;top:675.57px;font-size:19.48px;color:#242424;">12</div>
<div class="t" style="left:9.47px;top:704.57px;font-size:19.48px;color:#242424;">13</div>
<div class="t" style="left:9.47px;top:733.57px;font-size:19.48px;color:#242424;">14</div>
<div class="t" style="left:9.47px;top:762.57px;font-size:19.48px;color:#242424;">15</div>
<div class="t" style="left:9.47px;top:791.57px;font-size:19.48px;color:#242424;">16</div>
<div class="t" style="left:69.95px;top:358.26px;font-size:16.28px;color:#262626;font-weight:bold;transform:scaleX(0.8831);">Bill_Blog</div>
<div class="r" style="left:138.1px;top:355.2px;width:24px;height:24.5px;border:1.5px solid #A7ACB3;background:linear-gradient(#FFFFFF,#EEF0F3)"></div>
<svg class="s" style="left:0;top:0" width="1561" height="817" viewBox="0 0 1561 817"><polygon points="145.7,364.9 154.9,364.9 150.29999999999998,370.2" fill="#6A6A6A"/></svg>
<div class="t" style="left:192.60px;top:358.26px;font-size:16.28px;color:#262626;font-weight:bold;transform:scaleX(0.9136);">Billing_Doc</div>
<div class="r" style="left:279.7px;top:355.2px;width:24px;height:24.5px;border:1.5px solid #A7ACB3;background:linear-gradient(#FFFFFF,#EEF0F3)"></div>
<svg class="s" style="left:0;top:0" width="1561" height="817" viewBox="0 0 1561 817"><polygon points="287.3,364.9 296.5,364.9 291.9,370.2" fill="#6A6A6A"/></svg>
<div class="t" style="left:334.35px;top:358.26px;font-size:16.28px;color:#262626;font-weight:bold;transform:scaleX(0.9397);">SO_No</div>
<div class="r" style="left:390.79999999999995px;top:355.2px;width:24px;height:24.5px;border:1.5px solid #A7ACB3;background:linear-gradient(#FFFFFF,#EEF0F3)"></div>
<svg class="s" style="left:0;top:0" width="1561" height="817" viewBox="0 0 1561 817"><polygon points="398.4,364.9 407.59999999999997,364.9 402.99999999999994,370.2" fill="#6A6A6A"/></svg>
<div class="t" style="left:445.35px;top:358.26px;font-size:16.28px;color:#262626;font-weight:bold;transform:scaleX(0.9417);">Billing_Type</div>
<div class="r" style="left:540.6999999999999px;top:355.2px;width:24px;height:24.5px;border:1.5px solid #A7ACB3;background:linear-gradient(#FFFFFF,#EEF0F3)"></div>
<svg class="s" style="left:0;top:0" width="1561" height="817" viewBox="0 0 1561 817"><polygon points="548.3,364.9 557.4999999999999,364.9 552.9,370.2" fill="#6A6A6A"/></svg>
<div class="t" style="left:595.90px;top:358.26px;font-size:16.28px;color:#262626;font-weight:bold;transform:scaleX(0.9710);">Order_Creation_Date</div>
<div class="r" style="left:760.9px;top:355.2px;width:24px;height:24.5px;border:1.5px solid #A7ACB3;background:linear-gradient(#FFFFFF,#EEF0F3)"></div>
<svg class="s" style="left:0;top:0" width="1561" height="817" viewBox="0 0 1561 817"><polygon points="768.5,364.9 777.6999999999999,364.9 773.1,370.2" fill="#6A6A6A"/></svg>
<div class="t" style="left:815.60px;top:358.26px;font-size:16.28px;color:#262626;font-weight:bold;transform:scaleX(0.9161);">T1 LPP Code</div>
<div class="r" style="left:912.8px;top:355.2px;width:24px;height:24.5px;border:1.5px solid #A7ACB3;background:linear-gradient(#FFFFFF,#EEF0F3)"></div>
<svg class="s" style="left:0;top:0" width="1561" height="817" viewBox="0 0 1561 817"><polygon points="920.4,364.9 929.5999999999999,364.9 925.0,370.2" fill="#6A6A6A"/></svg>
<div class="t" style="left:967.70px;top:358.26px;font-size:16.28px;color:#262626;font-weight:bold;transform:scaleX(0.9564);">Payer_Code</div>
<div class="r" style="left:1063.4px;top:355.2px;width:24px;height:24.5px;border:1.5px solid #A7ACB3;background:linear-gradient(#FFFFFF,#EEF0F3)"></div>
<svg class="s" style="left:0;top:0" width="1561" height="817" viewBox="0 0 1561 817"><polygon points="1071.0,364.9 1080.2,364.9 1075.6000000000001,370.2" fill="#6A6A6A"/></svg>
<div class="t" style="left:1292.80px;top:358.26px;font-size:16.28px;color:#262626;font-weight:bold;transform:scaleX(0.9044);">Disty</div>
<div class="r" style="left:1509.0px;top:355.2px;width:24px;height:24.5px;border:1.5px solid #A7ACB3;background:linear-gradient(#FFFFFF,#EEF0F3)"></div>
<svg class="s" style="left:0;top:0" width="1561" height="817" viewBox="0 0 1561 817"><polygon points="1516.6,364.9 1525.8,364.9 1521.2,370.2" fill="#6A6A6A"/></svg>
<div class="t" style="left:44.00px;top:387.53px;font-size:15.99px;color:#2B2B2B;transform:scaleX(0.9038);">FD BILL</div>
<div class="t" style="left:166.70px;top:387.53px;font-size:15.99px;color:#2B2B2B;transform:scaleX(0.9856);">HA23126090</div>
<div class="t" style="left:308.50px;top:387.53px;font-size:15.99px;color:#2B2B2B;transform:scaleX(0.9842);">G000534290</div>
<div class="t" style="left:419.50px;top:387.53px;font-size:15.99px;color:#2B2B2B;transform:scaleX(0.8408);">YBFG</div>
<div class="t" style="left:698.40px;top:387.53px;font-size:15.99px;color:#2B2B2B;transform:scaleX(1.0064);">27-10-2025</div>
<div class="t" style="left:994.00px;top:387.53px;font-size:15.99px;color:#2B2B2B;transform:scaleX(1.0044);">1217690867</div>
<div class="t" style="left:1091.50px;top:387.53px;font-size:15.99px;color:#2B2B2B;transform:scaleX(0.9240);">GNG ELECTRONICS LIMITED</div>
<div class="t" style="left:1538.20px;top:387.53px;font-size:15.99px;color:#2B2B2B;transform:scaleX(0.9200);">Distributor</div>
<div class="t" style="left:44.00px;top:416.53px;font-size:15.99px;color:#2B2B2B;transform:scaleX(0.9038);">FD BILL</div>
<div class="t" style="left:166.70px;top:416.53px;font-size:15.99px;color:#2B2B2B;transform:scaleX(0.9856);">HA23126091</div>
<div class="t" style="left:308.50px;top:416.53px;font-size:15.99px;color:#2B2B2B;transform:scaleX(0.9842);">G000534292</div>
<div class="t" style="left:419.50px;top:416.53px;font-size:15.99px;color:#2B2B2B;transform:scaleX(0.8408);">YBFG</div>
<div class="t" style="left:698.40px;top:416.53px;font-size:15.99px;color:#2B2B2B;transform:scaleX(1.0064);">27-10-2025</div>
<div class="t" style="left:994.00px;top:416.53px;font-size:15.99px;color:#2B2B2B;transform:scaleX(1.0044);">1217690867</div>
<div class="t" style="left:1091.50px;top:416.53px;font-size:15.99px;color:#2B2B2B;transform:scaleX(0.9240);">GNG ELECTRONICS LIMITED</div>
<div class="t" style="left:1538.20px;top:416.53px;font-size:15.99px;color:#2B2B2B;transform:scaleX(0.9200);">Distributor</div>
<div class="t" style="left:44.00px;top:445.53px;font-size:15.99px;color:#2B2B2B;transform:scaleX(0.9038);">FD BILL</div>
<div class="t" style="left:166.70px;top:445.53px;font-size:15.99px;color:#2B2B2B;transform:scaleX(0.9856);">HA23126091</div>
<div class="t" style="left:308.50px;top:445.53px;font-size:15.99px;color:#2B2B2B;transform:scaleX(0.9842);">G000534292</div>
<div class="t" style="left:419.50px;top:445.53px;font-size:15.99px;color:#2B2B2B;transform:scaleX(0.8408);">YBFG</div>
<div class="t" style="left:698.40px;top:445.53px;font-size:15.99px;color:#2B2B2B;transform:scaleX(1.0064);">27-10-2025</div>
<div class="t" style="left:994.00px;top:445.53px;font-size:15.99px;color:#2B2B2B;transform:scaleX(1.0044);">1217690867</div>
<div class="t" style="left:1091.50px;top:445.53px;font-size:15.99px;color:#2B2B2B;transform:scaleX(0.9240);">GNG ELECTRONICS LIMITED</div>
<div class="t" style="left:1538.20px;top:445.53px;font-size:15.99px;color:#2B2B2B;transform:scaleX(0.9200);">Distributor</div>
<div class="t" style="left:44.00px;top:474.53px;font-size:15.99px;color:#2B2B2B;transform:scaleX(0.9038);">FD BILL</div>
<div class="t" style="left:166.70px;top:474.53px;font-size:15.99px;color:#2B2B2B;transform:scaleX(0.9856);">HA23126091</div>
<div class="t" style="left:308.50px;top:474.53px;font-size:15.99px;color:#2B2B2B;transform:scaleX(0.9842);">G000534292</div>
<div class="t" style="left:419.50px;top:474.53px;font-size:15.99px;color:#2B2B2B;transform:scaleX(0.8408);">YBFG</div>
<div class="t" style="left:698.40px;top:474.53px;font-size:15.99px;color:#2B2B2B;transform:scaleX(1.0064);">27-10-2025</div>
<div class="t" style="left:994.00px;top:474.53px;font-size:15.99px;color:#2B2B2B;transform:scaleX(1.0044);">1217690867</div>
<div class="t" style="left:1091.50px;top:474.53px;font-size:15.99px;color:#2B2B2B;transform:scaleX(0.9240);">GNG ELECTRONICS LIMITED</div>
<div class="t" style="left:1538.20px;top:474.53px;font-size:15.99px;color:#2B2B2B;transform:scaleX(0.9200);">Distributor</div>
<div class="t" style="left:44.00px;top:503.53px;font-size:15.99px;color:#2B2B2B;transform:scaleX(0.9038);">FD BILL</div>
<div class="t" style="left:166.70px;top:503.53px;font-size:15.99px;color:#2B2B2B;transform:scaleX(0.9856);">HA23126091</div>
<div class="t" style="left:308.50px;top:503.53px;font-size:15.99px;color:#2B2B2B;transform:scaleX(0.9842);">G000534292</div>
<div class="t" style="left:419.50px;top:503.53px;font-size:15.99px;color:#2B2B2B;transform:scaleX(0.8408);">YBFG</div>
<div class="t" style="left:698.40px;top:503.53px;font-size:15.99px;color:#2B2B2B;transform:scaleX(1.0064);">27-10-2025</div>
<div class="t" style="left:994.00px;top:503.53px;font-size:15.99px;color:#2B2B2B;transform:scaleX(1.0044);">1217690867</div>
<div class="t" style="left:1091.50px;top:503.53px;font-size:15.99px;color:#2B2B2B;transform:scaleX(0.9240);">GNG ELECTRONICS LIMITED</div>
<div class="t" style="left:1538.20px;top:503.53px;font-size:15.99px;color:#2B2B2B;transform:scaleX(0.9200);">Distributor</div>
<div class="t" style="left:44.00px;top:532.53px;font-size:15.99px;color:#2B2B2B;transform:scaleX(0.9038);">FD BILL</div>
<div class="t" style="left:166.70px;top:532.53px;font-size:15.99px;color:#2B2B2B;transform:scaleX(0.9856);">HA23126091</div>
<div class="t" style="left:308.50px;top:532.53px;font-size:15.99px;color:#2B2B2B;transform:scaleX(0.9842);">G000534292</div>
<div class="t" style="left:419.50px;top:532.53px;font-size:15.99px;color:#2B2B2B;transform:scaleX(0.8408);">YBFG</div>
<div class="t" style="left:698.40px;top:532.53px;font-size:15.99px;color:#2B2B2B;transform:scaleX(1.0064);">27-10-2025</div>
<div class="t" style="left:994.00px;top:532.53px;font-size:15.99px;color:#2B2B2B;transform:scaleX(1.0044);">1217690867</div>
<div class="t" style="left:1091.50px;top:532.53px;font-size:15.99px;color:#2B2B2B;transform:scaleX(0.9240);">GNG ELECTRONICS LIMITED</div>
<div class="t" style="left:1538.20px;top:532.53px;font-size:15.99px;color:#2B2B2B;transform:scaleX(0.9200);">Distributor</div>
<div class="t" style="left:44.00px;top:561.53px;font-size:15.99px;color:#2B2B2B;transform:scaleX(0.9038);">FD BILL</div>
<div class="t" style="left:166.70px;top:561.53px;font-size:15.99px;color:#2B2B2B;transform:scaleX(0.9856);">HA06150144</div>
<div class="t" style="left:308.50px;top:561.53px;font-size:15.99px;color:#2B2B2B;transform:scaleX(0.9842);">G901655879</div>
<div class="t" style="left:419.50px;top:561.53px;font-size:15.99px;color:#2B2B2B;transform:scaleX(0.8408);">YBOI</div>
<div class="t" style="left:700.79px;top:561.53px;font-size:15.99px;color:#2B2B2B;transform:scaleX(1.0064);">11-11-2025</div>
<div class="t" style="left:942.00px;top:561.53px;font-size:15.99px;color:#2B2B2B;">IN00000008</div>
<div class="t" style="left:1091.50px;top:561.53px;font-size:15.99px;color:#2B2B2B;transform:scaleX(1.0141);">India one time customer SMB Pro</div>
<div class="t" style="left:1538.20px;top:561.53px;font-size:15.99px;color:#2B2B2B;transform:scaleX(0.9200);">Distributor</div>
<div class="t" style="left:44.00px;top:590.53px;font-size:15.99px;color:#2B2B2B;transform:scaleX(0.9038);">FD BILL</div>
<div class="t" style="left:166.70px;top:590.53px;font-size:15.99px;color:#2B2B2B;transform:scaleX(0.9856);">HA06150144</div>
<div class="t" style="left:308.50px;top:590.53px;font-size:15.99px;color:#2B2B2B;transform:scaleX(0.9842);">G901655879</div>
<div class="t" style="left:419.50px;top:590.53px;font-size:15.99px;color:#2B2B2B;transform:scaleX(0.8408);">YBOI</div>
<div class="t" style="left:700.79px;top:590.53px;font-size:15.99px;color:#2B2B2B;transform:scaleX(1.0064);">11-11-2025</div>
<div class="t" style="left:942.00px;top:590.53px;font-size:15.99px;color:#2B2B2B;">IN00000008</div>
<div class="t" style="left:1091.50px;top:590.53px;font-size:15.99px;color:#2B2B2B;transform:scaleX(1.0141);">India one time customer SMB Pro</div>
<div class="t" style="left:1538.20px;top:590.53px;font-size:15.99px;color:#2B2B2B;transform:scaleX(0.9200);">Distributor</div>
<div class="t" style="left:44.00px;top:619.53px;font-size:15.99px;color:#2B2B2B;transform:scaleX(0.9038);">FD BILL</div>
<div class="t" style="left:166.70px;top:619.53px;font-size:15.99px;color:#2B2B2B;transform:scaleX(0.9856);">HA11065268</div>
<div class="t" style="left:308.50px;top:619.53px;font-size:15.99px;color:#2B2B2B;transform:scaleX(0.9842);">G901529699</div>
<div class="t" style="left:419.50px;top:619.53px;font-size:15.99px;color:#2B2B2B;transform:scaleX(0.8408);">YBOI</div>
<div class="t" style="left:698.40px;top:619.53px;font-size:15.99px;color:#2B2B2B;transform:scaleX(1.0064);">06-10-2025</div>
<div class="t" style="left:942.00px;top:619.53px;font-size:15.99px;color:#2B2B2B;">IN00000008</div>
<div class="t" style="left:1091.50px;top:619.53px;font-size:15.99px;color:#2B2B2B;transform:scaleX(1.0141);">India one time customer SMB Pro</div>
<div class="t" style="left:1538.20px;top:619.53px;font-size:15.99px;color:#2B2B2B;transform:scaleX(0.9200);">Distributor</div>
<div class="t" style="left:44.00px;top:648.53px;font-size:15.99px;color:#2B2B2B;transform:scaleX(0.9038);">FD BILL</div>
<div class="t" style="left:166.70px;top:648.53px;font-size:15.99px;color:#2B2B2B;transform:scaleX(0.9856);">HA06136799</div>
<div class="t" style="left:308.50px;top:648.53px;font-size:15.99px;color:#2B2B2B;transform:scaleX(0.9842);">G901544960</div>
<div class="t" style="left:419.50px;top:648.53px;font-size:15.99px;color:#2B2B2B;transform:scaleX(0.8408);">YBOI</div>
<div class="t" style="left:698.40px;top:648.53px;font-size:15.99px;color:#2B2B2B;transform:scaleX(1.0064);">10-10-2025</div>
<div class="t" style="left:942.00px;top:648.53px;font-size:15.99px;color:#2B2B2B;">IN00000008</div>
<div class="t" style="left:1091.50px;top:648.53px;font-size:15.99px;color:#2B2B2B;transform:scaleX(1.0141);">India one time customer SMB Pro</div>
<div class="t" style="left:1538.20px;top:648.53px;font-size:15.99px;color:#2B2B2B;transform:scaleX(0.9200);">Distributor</div>
<div class="t" style="left:44.00px;top:677.53px;font-size:15.99px;color:#2B2B2B;transform:scaleX(0.9038);">FD BILL</div>
<div class="t" style="left:166.70px;top:677.53px;font-size:15.99px;color:#2B2B2B;transform:scaleX(0.9856);">HA06138854</div>
<div class="t" style="left:308.50px;top:677.53px;font-size:15.99px;color:#2B2B2B;transform:scaleX(0.9842);">G901562758</div>
<div class="t" style="left:419.50px;top:677.53px;font-size:15.99px;color:#2B2B2B;transform:scaleX(0.8408);">YBOI</div>
<div class="t" style="left:698.40px;top:677.53px;font-size:15.99px;color:#2B2B2B;transform:scaleX(1.0064);">15-10-2025</div>
<div class="t" style="left:942.00px;top:677.53px;font-size:15.99px;color:#2B2B2B;">IN00000007</div>
<div class="t" style="left:1091.50px;top:677.53px;font-size:15.99px;color:#2B2B2B;transform:scaleX(1.0104);">India one time customer B2C Public</div>
<div class="t" style="left:1538.20px;top:677.53px;font-size:15.99px;color:#2B2B2B;transform:scaleX(0.9200);">Distributor</div>
<div class="t" style="left:44.00px;top:706.53px;font-size:15.99px;color:#2B2B2B;transform:scaleX(0.9038);">FD BILL</div>
<div class="t" style="left:166.70px;top:706.53px;font-size:15.99px;color:#2B2B2B;transform:scaleX(0.9856);">HA06140450</div>
<div class="t" style="left:308.50px;top:706.53px;font-size:15.99px;color:#2B2B2B;transform:scaleX(0.9842);">G901582176</div>
<div class="t" style="left:419.50px;top:706.53px;font-size:15.99px;color:#2B2B2B;transform:scaleX(0.8408);">YBOI</div>
<div class="t" style="left:698.40px;top:706.53px;font-size:15.99px;color:#2B2B2B;transform:scaleX(1.0064);">20-10-2025</div>
<div class="t" style="left:942.00px;top:706.53px;font-size:15.99px;color:#2B2B2B;">IN00000007</div>
<div class="t" style="left:1091.50px;top:706.53px;font-size:15.99px;color:#2B2B2B;transform:scaleX(1.0104);">India one time customer B2C Public</div>
<div class="t" style="left:1538.20px;top:706.53px;font-size:15.99px;color:#2B2B2B;transform:scaleX(0.9200);">Distributor</div>
<div class="t" style="left:44.00px;top:735.53px;font-size:15.99px;color:#2B2B2B;transform:scaleX(0.9038);">FD BILL</div>
<div class="t" style="left:166.70px;top:735.53px;font-size:15.99px;color:#2B2B2B;transform:scaleX(0.9856);">HA11068786</div>
<div class="t" style="left:308.50px;top:735.53px;font-size:15.99px;color:#2B2B2B;transform:scaleX(0.9842);">G901595320</div>
<div class="t" style="left:419.50px;top:735.53px;font-size:15.99px;color:#2B2B2B;transform:scaleX(0.8408);">YBOI</div>
<div class="t" style="left:698.40px;top:735.53px;font-size:15.99px;color:#2B2B2B;transform:scaleX(1.0064);">23-10-2025</div>
<div class="t" style="left:942.00px;top:735.53px;font-size:15.99px;color:#2B2B2B;">IN00000007</div>
<div class="t" style="left:1091.50px;top:735.53px;font-size:15.99px;color:#2B2B2B;transform:scaleX(1.0104);">India one time customer B2C Public</div>
<div class="t" style="left:1538.20px;top:735.53px;font-size:15.99px;color:#2B2B2B;transform:scaleX(0.9200);">Distributor</div>
<div class="t" style="left:44.00px;top:764.53px;font-size:15.99px;color:#2B2B2B;transform:scaleX(0.9038);">FD BILL</div>
<div class="t" style="left:166.70px;top:764.53px;font-size:15.99px;color:#2B2B2B;transform:scaleX(0.9856);">HA06147657</div>
<div class="t" style="left:308.50px;top:764.53px;font-size:15.99px;color:#2B2B2B;transform:scaleX(0.9842);">G901628885</div>
<div class="t" style="left:419.50px;top:764.53px;font-size:15.99px;color:#2B2B2B;transform:scaleX(0.8408);">YBOI</div>
<div class="t" style="left:699.59px;top:764.53px;font-size:15.99px;color:#2B2B2B;transform:scaleX(1.0064);">03-11-2025</div>
<div class="t" style="left:942.00px;top:764.53px;font-size:15.99px;color:#2B2B2B;">IN00000007</div>
<div class="t" style="left:1091.50px;top:764.53px;font-size:15.99px;color:#2B2B2B;transform:scaleX(1.0104);">India one time customer B2C Public</div>
<div class="t" style="left:1538.20px;top:764.53px;font-size:15.99px;color:#2B2B2B;transform:scaleX(0.9200);">Distributor</div>
<div class="t" style="left:44.00px;top:793.53px;font-size:15.99px;color:#2B2B2B;transform:scaleX(0.9038);">FD BILL</div>
<div class="t" style="left:166.70px;top:793.53px;font-size:15.99px;color:#2B2B2B;transform:scaleX(0.9856);">HA11072092</div>
<div class="t" style="left:308.50px;top:793.53px;font-size:15.99px;color:#2B2B2B;transform:scaleX(0.9842);">G901653429</div>
<div class="t" style="left:419.50px;top:793.53px;font-size:15.99px;color:#2B2B2B;transform:scaleX(0.8408);">YBOI</div>
<div class="t" style="left:699.59px;top:793.53px;font-size:15.99px;color:#2B2B2B;transform:scaleX(1.0064);">10-11-2025</div>
<div class="t" style="left:942.00px;top:793.53px;font-size:15.99px;color:#2B2B2B;">IN00000007</div>
<div class="t" style="left:1091.50px;top:793.53px;font-size:15.99px;color:#2B2B2B;transform:scaleX(1.0104);">India one time customer B2C Public</div>
<div class="t" style="left:1538.20px;top:793.53px;font-size:15.99px;color:#2B2B2B;transform:scaleX(0.9200);">Distributor</div>
<div class="r" style="left:38.3px;top:380px;width:125.5px;height:32px;border:2px solid #1E7145"></div>
<div class="r" style="left:158.7px;top:406.9px;width:6.4px;height:6.4px;background:#1E7145;border:1px solid #fff"></div>
</body></html>
